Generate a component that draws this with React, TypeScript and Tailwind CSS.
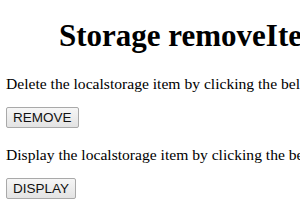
import React from "react";

export default function App() {
  const btn =
    "h-[21px] px-[6px] border border-[#a9a9a9] rounded-[2px] bg-gradient-to-b from-[#f6f6f6] to-[#e3e3e3] text-[13.5px] leading-none text-[#111] font-['Liberation_Sans',Arial,sans-serif]";
  return (
    <div className="w-[300px] h-[210px] overflow-hidden bg-white text-black font-['Liberation_Serif','Times_New_Roman',serif]">
      <div className="flex flex-col items-start pl-[6px] pt-[17px]">
        <h1 className="whitespace-nowrap pl-[53px] text-[31px] font-bold leading-[37px]">
          Storage removeItem() Method
        </h1>
        <p className="mt-[21px] whitespace-nowrap text-[15.6px] leading-[17px]">
          Delete the localstorage item by clicking the below button:
        </p>
        <button className={`${btn} mt-[15px]`}>REMOVE</button>
        <p className="mt-[18px] whitespace-nowrap text-[15.6px] leading-[17px]">
          Display the localstorage item by clicking the below button:
        </p>
        <button className={`${btn} mt-[15px]`}>DISPLAY</button>
      </div>
    </div>
  );
}
